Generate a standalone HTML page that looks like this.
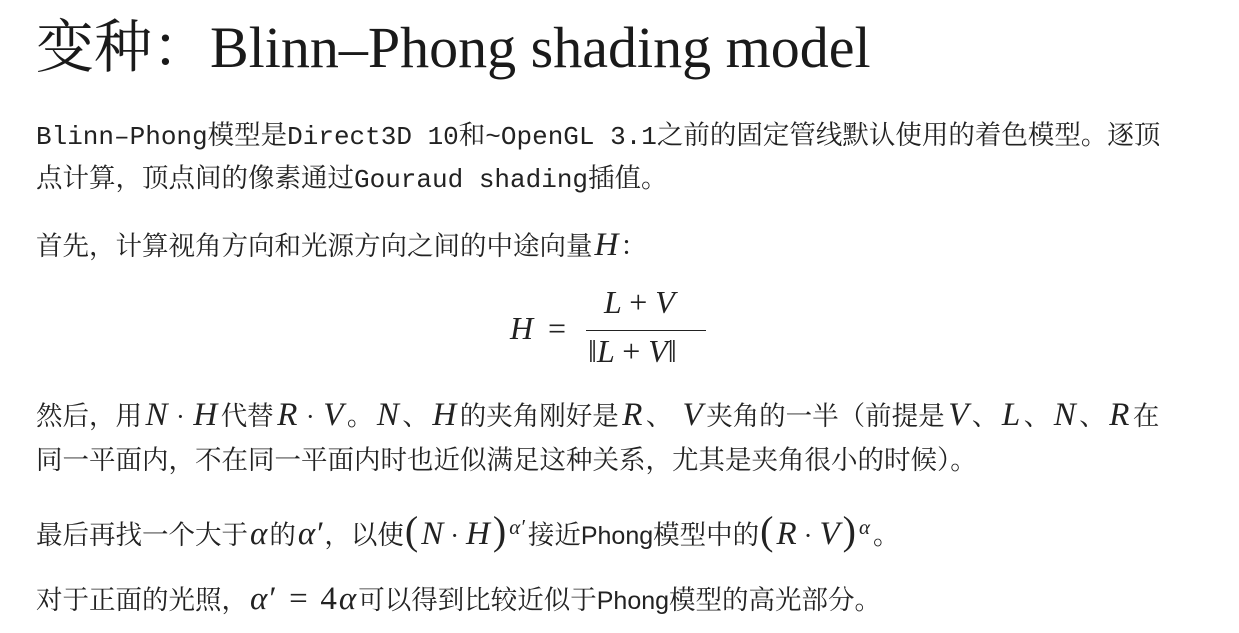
<!DOCTYPE html>
<html><head><meta charset="utf-8"><style>
body{margin:0;width:1239px;height:633px;background:#fff;color:#222;overflow:hidden;position:relative;font-family:"Liberation Serif","Noto Serif CJK SC",serif}
.l{position:absolute;left:36px;white-space:nowrap;font-size:26.5px;line-height:30px}
.m{font-family:"Liberation Mono","Noto Serif CJK SC",monospace;font-size:26px}
.m b{font-weight:normal;font-family:"Noto Serif CJK SC",serif;font-size:26.5px}
.s{font-family:"Liberation Sans","Noto Sans CJK SC",sans-serif;font-size:25px}
i{font-family:"Liberation Serif",serif;font-size:33px;padding:0 2px}
.w i{padding:0 3.5px}
.d{margin:0 5px}
.p{font-size:40px;padding:0 1px}
sup{font-size:21px;font-style:italic;padding:0 3px 0 2px}
h1{position:absolute;left:36px;top:13px;margin:0;font-weight:normal;font-size:58px;line-height:70px;white-space:nowrap;color:#1a1a1a}
</style></head><body>
<h1>变种：Blinn–Phong shading model</h1>
<div class="l m" style="top:118px">Blinn–Phong<b>模型是</b>Direct3D 10<b>和</b>~OpenGL 3.1<b>之前的固定管线默认使用的着色模型。逐顶</b></div>
<div class="l m" style="top:161px"><b>点计算，顶点间的像素通过</b>Gouraud shading<b>插值。</b></div>
<div class="l" style="top:230px">首先，计算视角方向和光源方向之间的中途向量<i>H</i>：</div>
<div style="position:absolute;left:510px;top:310px;font-size:32px;font-style:italic">H</div>
<div style="position:absolute;left:548px;top:310px;font-size:32px">=</div>
<div style="position:absolute;left:604px;top:284px;font-size:32px;font-style:italic">L <span style="font-style:normal">+</span> V</div>
<div style="position:absolute;left:586px;top:330px;width:120px;border-top:1.5px solid #222"></div>
<div style="position:absolute;left:588px;top:333px;font-size:32px;font-style:italic"><span style="font-style:normal">‖</span>L <span style="font-style:normal">+</span> V<span style="font-style:normal">‖</span></div>
<div class="l w" style="top:400px">然后，用<i>N</i><span class="d">·</span><i>H</i>代替<i>R</i><span class="d">·</span><i>V</i>。<i>N</i>、<i>H</i>的夹角刚好是<i>R</i>、 <i>V</i>夹角的一半（前提是<i>V</i>、<i>L</i>、<i>N</i>、<i>R</i>在</div>
<div class="l" style="top:445px">同一平面内，不在同一平面内时也近似满足这种关系，尤其是夹角很小的时候）。</div>
<div class="l" style="top:512px">最后再找一个大于<i>α</i>的<i>α′</i>，以使<span class="p">(</span><i>N</i><span class="d">·</span><i>H</i><span class="p">)</span><sup>α′</sup>接近<span class="s">Phong</span>模型中的<span class="p">(</span><i>R</i><span class="d">·</span><i>V</i><span class="p">)</span><sup>α</sup>。</div>
<div class="l" style="top:584px">对于正面的光照，<i>α′</i> <span style="font-size:33px;margin:0 6px">=</span> <span style="font-size:33px">4</span><i>α</i>可以得到比较近似于<span class="s">Phong</span>模型的高光部分。</div>
</body></html>
